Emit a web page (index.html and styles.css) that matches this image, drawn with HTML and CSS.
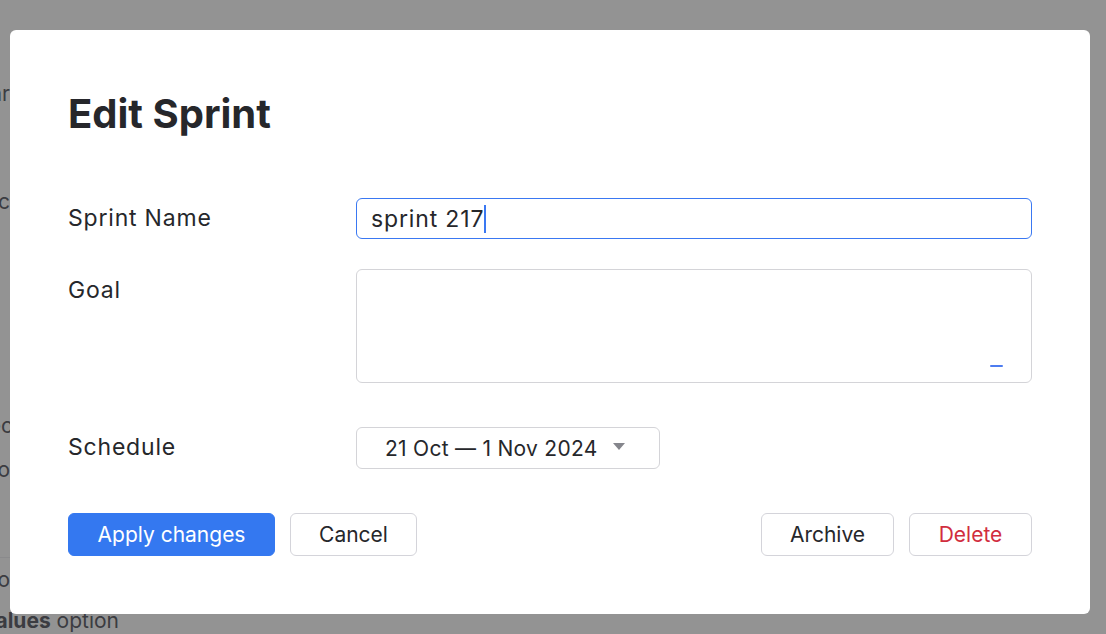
FILE: index.html
```html
<!DOCTYPE html>
<html>
<head>
<meta charset="utf-8">
<link rel="stylesheet" href="styles.css">
</head>
<body>
<div class="page">
  <div class="bg-line l1">Calendar</div>
  <div class="bg-line l2">Doc</div>
  <div class="bg-line l3">Selec</div>
  <div class="bg-line l4">Do</div>
  <div class="bg-rule"></div>
  <div class="bg-line l5">Do</div>
  <div class="bg-line l6"><b>Values</b> option</div>
</div>
<div class="overlay">
  <div class="dialog">
    <h1 class="title">Edit Sprint</h1>
    <div class="form">
      <label class="label label-center">Sprint Name</label>
      <div class="input focused"><span>sprint 217</span><span class="caret"></span></div>
      <label class="label label-top">Goal</label>
      <div class="textarea"><span class="mark"></span></div>
      <label class="label label-center">Schedule</label>
      <div class="field-wrap">
        <div class="select"><span class="select-text">21 Oct — 1 Nov 2024</span><span class="tri"></span></div>
      </div>
    </div>
    <div class="actions">
      <div class="group">
        <button class="btn primary">Apply changes</button>
        <button class="btn">Cancel</button>
      </div>
      <div class="group">
        <button class="btn btn-archive">Archive</button>
        <button class="btn danger">Delete</button>
      </div>
    </div>
  </div>
</div>
</body>
</html>
```
FILE: styles.css
```css
* { box-sizing: border-box; }
html, body { margin: 0; padding: 0; }
body {
  width: 1106px;
  height: 634px;
  overflow: hidden;
  background: #939393;
  font-family: Inter, "Liberation Sans", sans-serif;
  color: #26272b;
  position: relative;
}
.page {
  position: absolute;
  inset: 0;
  color: #3b3c41;
  font-size: 21px;
}
.bg-line {
  position: absolute;
  right: 1096px;
  white-space: nowrap;
}
.l1 { top: 81px; }
.l2 { top: 189px; }
.l3 { top: 413px; right: 1093px; }
.l4 { top: 457px; }
.l5 { top: 567px; }
.l6 { top: 608px; left: -19px; right: auto; }
.l6 b { font-weight: 700; }
.bg-rule {
  position: absolute;
  left: 0;
  width: 12px;
  top: 557px;
  border-top: 1px solid #8a8a8c;
}
.overlay {
  position: absolute;
  inset: 0;
}
.dialog {
  position: absolute;
  left: 10px;
  top: 30px;
  width: 1080px;
  height: 584px;
  background: #fff;
  border-radius: 6px;
  padding: 58px 58px 0 58px;
}
.title {
  margin: 0;
  font-size: 40px;
  font-weight: 700;
  line-height: 52px;
  letter-spacing: 0;
  color: #26272b;
}
.form {
  margin-top: 58px;
  display: grid;
  grid-template-columns: 288px 676px;
  row-gap: 30px;
  align-items: start;
}
.label {
  font-size: 23px;
  letter-spacing: 0.8px;
  line-height: 41px;
  color: #26272b;
}
.label-top { line-height: 43px; }
.input {
  height: 41px;
  border: 1px solid #3a78f2;
  border-radius: 6px;
  padding: 0 14px;
  display: flex;
  align-items: center;
  font-size: 23px;
  letter-spacing: 0.85px;
}
.caret {
  display: inline-block;
  width: 2px;
  height: 28px;
  background: #3a78f2;
  margin-left: 0;
}
.textarea {
  height: 114px;
  border: 1px solid #d4d4d8;
  border-radius: 6px;
  position: relative;
  margin-bottom: 14px;
}
.mark {
  position: absolute;
  right: 28px;
  bottom: 15px;
  width: 13px;
  height: 2px;
  background: #4d7cf0;
  border-radius: 1px;
}
.field-wrap { display: flex; }
.select {
  height: 42px;
  width: 304px;
  border: 1.5px solid #d4d4d8;
  border-radius: 6px;
  display: flex;
  align-items: center;
  padding: 0 0 0 28px;
  font-size: 21px;
  gap: 15px;
}
.select-text { letter-spacing: 0.28px; }
.tri {
  width: 0;
  height: 0;
  border-left: 6px solid transparent;
  border-right: 6px solid transparent;
  border-top: 7px solid #85868c;
  margin-top: -4px;
}
.actions {
  margin-top: 44px;
  display: flex;
  justify-content: space-between;
}
.group { display: flex; gap: 15px; }
.btn {
  height: 43px;
  font-family: Inter, "Liberation Sans", sans-serif;
  font-size: 21px;
  color: #26272b;
  background: #fff;
  border: 1.5px solid #d4d4da;
  border-radius: 6px;
  padding: 0;
  width: 127px;
}
.primary {
  background: #3478f0;
  border-color: #3478f0;
  color: #fff;
  width: 207px;
}
.btn-archive { width: 133px; }
.danger { color: #d12d3e; width: 123px; }
```
